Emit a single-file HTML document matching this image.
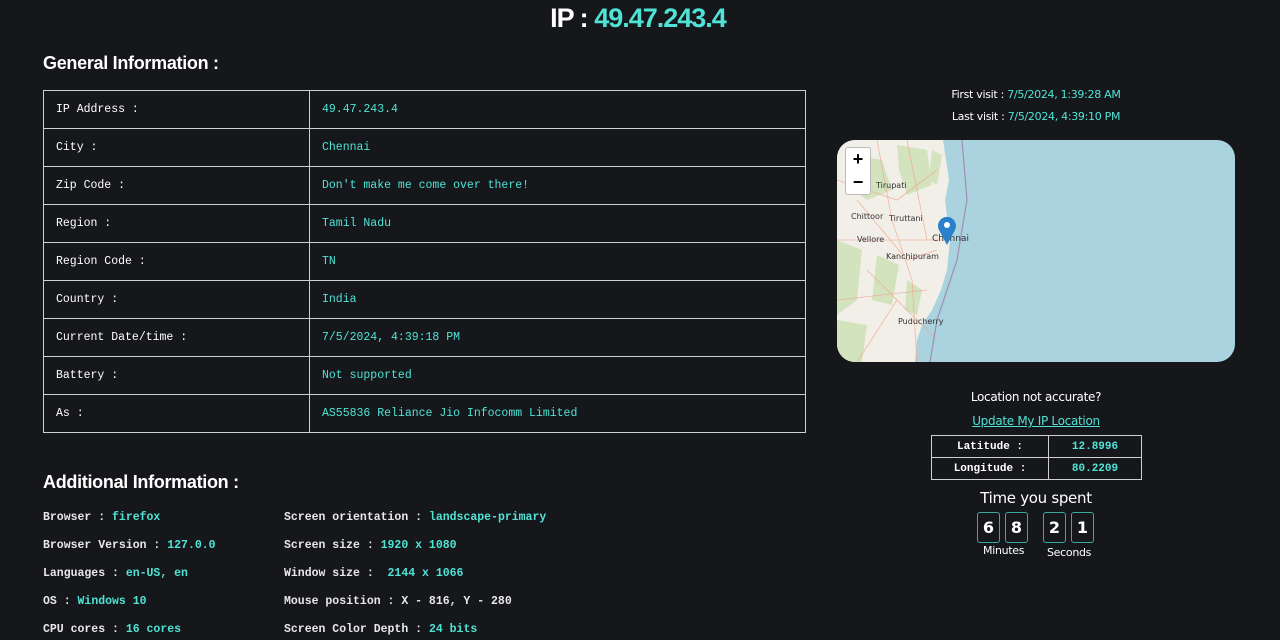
<!DOCTYPE html>
<html><head><meta charset="utf-8"><style>
body{margin:0;background:#16171b;color:#fff;font-family:"Liberation Sans",sans-serif;width:1280px;height:640px;overflow:hidden;position:relative}
.c{color:#4fe3d6}
.abs{position:absolute}
h1{position:absolute;top:0;left:0;width:1276px;text-align:center;margin:0;font-size:27px;line-height:36px;font-weight:bold;letter-spacing:-1px}
.h2{position:absolute;left:43px;font-size:18px;font-weight:bold;letter-spacing:-0.3px}
table.g{position:absolute;left:43px;top:90px;width:763px;border-collapse:collapse;font-family:"Liberation Mono",monospace;font-size:11.5px}
table.g td{border:1px solid #cfcfcf;height:37px;padding:0 0 0 12px}
table.g td:first-child{width:253px}
.ad{position:absolute;font-family:"Liberation Mono",monospace;font-size:11.5px;font-weight:bold;color:#e8e8e8;line-height:14px}
.ad span{color:#4fe3d6}
.sm{position:absolute;width:400px;left:836px;text-align:center;font-family:"DejaVu Sans",sans-serif;font-size:11px;letter-spacing:-0.3px}
table.l{position:absolute;left:931px;top:435px;width:211px;border-collapse:collapse;font-family:"Liberation Mono",monospace;font-size:11px;font-weight:bold}
table.l td{border:1px solid #cfcfcf;height:21px;text-align:center;padding:0}
.box{position:absolute;top:512px;width:21px;height:29px;border:1.5px solid #3aa89e;border-radius:3px;text-align:center;line-height:29px;font-family:"DejaVu Sans",sans-serif;font-size:16px;font-weight:bold}
.ml{position:absolute;font-size:8px;color:#333;font-family:'DejaVu Sans',sans-serif;line-height:10px}
</style></head><body>
<h1>IP : <span class="c">49.47.243.4</span></h1>
<div class="h2" style="top:53px">General Information :</div>
<table class="g">
<tr><td>IP Address :</td><td class="c">49.47.243.4</td></tr>
<tr><td>City :</td><td class="c">Chennai</td></tr>
<tr><td>Zip Code :</td><td class="c">Don't make me come over there!</td></tr>
<tr><td>Region :</td><td class="c">Tamil Nadu</td></tr>
<tr><td>Region Code :</td><td class="c">TN</td></tr>
<tr><td>Country :</td><td class="c">India</td></tr>
<tr><td>Current Date/time :</td><td class="c">7/5/2024, 4:39:18 PM</td></tr>
<tr><td>Battery :</td><td class="c">Not supported</td></tr>
<tr><td>As :</td><td class="c">AS55836 Reliance Jio Infocomm Limited</td></tr>
</table>
<div class="h2" style="top:472px">Additional Information :</div>
<div class="ad" style="left:43px;top:511px">Browser : <span>firefox</span></div>
<div class="ad" style="left:43px;top:539px">Browser Version : <span>127.0.0</span></div>
<div class="ad" style="left:43px;top:567px">Languages : <span>en-US, en</span></div>
<div class="ad" style="left:43px;top:595px">OS : <span>Windows 10</span></div>
<div class="ad" style="left:43px;top:623px">CPU cores : <span>16 cores</span></div>
<div class="ad" style="left:284px;top:511px">Screen orientation : <span>landscape-primary</span></div>
<div class="ad" style="left:284px;top:539px">Screen size : <span>1920 x 1080</span></div>
<div class="ad" style="left:284px;top:567px">Window size : &nbsp;<span>2144 x 1066</span></div>
<div class="ad" style="left:284px;top:595px">Mouse position : X - 816, Y - 280</div>
<div class="ad" style="left:284px;top:623px">Screen Color Depth : <span>24 bits</span></div>

<div class="sm" style="top:88px">First visit : <span class="c">7/5/2024, 1:39:28 AM</span></div>
<div class="sm" style="top:110px">Last visit : <span class="c">7/5/2024, 4:39:10 PM</span></div>
<div class="abs" style="left:837px;top:140px;width:398px;height:222px;border-radius:18px;overflow:hidden;background:#aad3df">
<svg width="398" height="222" style="position:absolute;left:0;top:0">
<path d="M0 0 H106 L112 40 L108 60 L113 100 L110 130 L104 150 L95 170 L85 185 L80 200 L78 222 H0Z" fill="#f2efe9"/>
<g fill="#cfe2b8" opacity=".9">
<path d="M15 15 L45 20 L55 50 L30 60 L10 45Z"/><path d="M60 5 L90 10 L95 45 L70 55 L62 30Z"/><path d="M0 100 L25 110 L20 160 L0 175Z"/><path d="M40 115 L62 125 L55 165 L35 160Z"/><path d="M0 180 L30 185 L25 222 H0Z"/><path d="M70 140 L85 150 L80 175 L68 170Z"/><path d="M95 10 L105 15 L100 45 L92 40Z"/>
</g>
<g stroke="#efa890" stroke-width="0.8" fill="none" opacity=".8">
<path d="M20 60 L70 120 L100 110"/><path d="M0 100 L110 100"/><path d="M40 0 L55 80 L75 140 L80 222"/><path d="M0 160 L90 150"/><path d="M20 222 L60 160"/><path d="M0 40 L60 60 L100 30"/><path d="M30 130 L100 200"/><path d="M70 0 L90 100"/>
</g>
<path d="M125 0 L130 60 L120 120 L100 180 L93 222" stroke="#9d8fb0" stroke-width="1.2" fill="none"/>
</svg>
<div class="abs" style="left:8px;top:7px;width:24px;height:46px;background:#fff;border:1px solid #bbb;border-radius:3px;color:#000;font-weight:bold;font-size:18px;text-align:center;line-height:23px">+<br>−</div>
<div class="ml" style="left:39px;top:41px">Tirupati</div>
<div class="ml" style="left:14px;top:72px">Chittoor</div>
<div class="ml" style="left:52px;top:74px">Tiruttani</div>
<div class="ml" style="left:20px;top:95px">Vellore</div>
<div class="ml" style="left:95px;top:94px;font-size:9px">Chennai</div>
<div class="ml" style="left:49px;top:112px">Kanchipuram</div>
<div class="ml" style="left:61px;top:177px">Puducherry</div>
<svg class="abs" style="left:100px;top:76px" width="20" height="30"><path d="M10 29 L2 14 A9 9 0 1 1 18 14Z" fill="#2a81cb"/><circle cx="10" cy="9" r="3" fill="#fff"/></svg>
</div>
<div class="sm" style="top:390px;font-size:12px">Location not accurate?</div>
<div class="sm" style="top:414px;font-size:12px"><span class="c" style="text-decoration:underline">Update My IP Location</span></div>
<table class="l"><tr><td>Latitude :</td><td class="c" style="width:92px">12.8996</td></tr><tr><td>Longitude :</td><td class="c">80.2209</td></tr></table>
<div class="sm" style="top:489px;font-size:15px">Time you spent</div>
<div class="box" style="left:977px">6</div><div class="box" style="left:1005px">8</div>
<div class="box" style="left:1043px">2</div><div class="box" style="left:1071px">1</div>
<div class="abs" style="left:983px;top:544px;font-size:11px;font-family:'DejaVu Sans',sans-serif;letter-spacing:-0.3px">Minutes</div>
<div class="abs" style="left:1047px;top:546px;font-size:11px;font-family:'DejaVu Sans',sans-serif;letter-spacing:-0.3px">Seconds</div>
</body></html>
